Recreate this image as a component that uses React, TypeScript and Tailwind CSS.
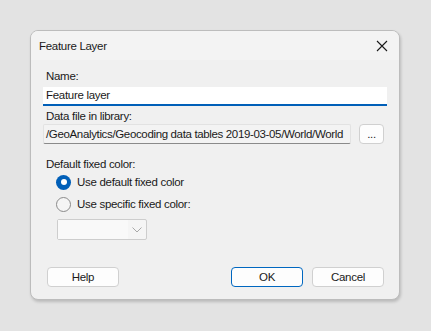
import React from "react";

export default function App() {
  return (
    <div
      className="w-[431px] h-[331px] bg-[#e3e3e3] pt-[30px] pl-[30px] text-[11.5px] tracking-[-0.3px] text-[#1a1a1a]"
      style={{ fontFamily: '"Liberation Sans", Arial, sans-serif' }}
    >
      <div className="w-[370px] h-[270px] rounded-[8px] border border-[#bcbcbc] bg-[#f0f0f0] shadow-[1px_2px_3px_rgba(0,0,0,0.18)] overflow-hidden flex flex-col">
        <div className="h-[29px] bg-[#f3f3f3] flex items-center justify-between pl-[8px] pr-[10px]">
          <span className="leading-[16px]">Feature Layer</span>
          <svg width="12" height="12" viewBox="0 0 12 12" className="mr-[1px]">
            <path d="M1 1 L11 11 M11 1 L1 11" stroke="#1a1a1a" strokeWidth="1.1" />
          </svg>
        </div>
        <div className="flex flex-col px-[12px] pt-[8px]">
          <div className="h-[16px] leading-[16px] pl-[3px]">Name:</div>
          <div className="mt-[3px] h-[19px] bg-white border-b-2 border-[#005fb8] pl-[3px] leading-[17px]">
            Feature layer
          </div>
          <div className="mt-[2px] h-[16px] leading-[16px] pl-[3px]">Data file in library:</div>
          <div className="flex gap-[8px] items-start">
            <div className="w-[308px] h-[20px] bg-[#f3f3f3] border border-[#e2e2e2] border-b-[#8a8a8a] rounded-[2px] pl-[2px] leading-[18px] overflow-hidden whitespace-nowrap tracking-[-0.35px]">
              /GeoAnalytics/Geocoding data tables 2019-03-05/World/World
            </div>
            <div className="w-[25px] h-[20px] bg-[#fdfdfd] border border-[#d0d0d0] rounded-[4px] flex items-center justify-center leading-[18px]">
              ...
            </div>
          </div>
          <div className="mt-[12px] h-[16px] leading-[16px] pl-[3px]">Default fixed color:</div>
          <div className="mt-[2px] h-[16px] flex items-center pl-[13px]">
            <span className="w-[15px] h-[15px] rounded-full bg-[#005fb8] flex items-center justify-center">
              <span className="w-[6px] h-[6px] rounded-full bg-white" />
            </span>
            <span className="ml-[6px] leading-[16px]">Use default fixed color</span>
          </div>
          <div className="mt-[6px] h-[16px] flex items-center pl-[13px]">
            <span className="w-[15px] h-[15px] rounded-full bg-[#f5f5f5] border border-[#8a8a8a]" />
            <span className="ml-[6px] leading-[16px]">Use specific fixed color:</span>
          </div>
          <div className="mt-[7px] ml-[14px] w-[90px] h-[21px] border border-[#cdcdcd] rounded-[2px] bg-[#f5f5f5] flex">
            <div className="w-[70px] h-full bg-[#f9f9f9]" />
            <div className="flex-1 flex items-center justify-center">
              <svg width="10" height="6" viewBox="0 0 10 6">
                <path d="M0.5 0.5 L5 5 L9.5 0.5" stroke="#a8a8a8" strokeWidth="1" fill="none" />
              </svg>
            </div>
          </div>
          <div className="mt-[27px] flex items-center">
            <button className="ml-[4px] w-[72px] h-[20px] bg-[#fdfdfd] border border-[#d0d0d0] rounded-[4px] leading-[18px]">
              Help
            </button>
            <button className="ml-auto w-[72px] h-[20px] bg-[#fdfdfd] border border-[#0067c0] rounded-[4px] leading-[18px]">
              OK
            </button>
            <button className="ml-[9px] mr-[3px] w-[72px] h-[20px] bg-[#fdfdfd] border border-[#d0d0d0] rounded-[4px] leading-[18px]">
              Cancel
            </button>
          </div>
        </div>
      </div>
    </div>
  );
}
